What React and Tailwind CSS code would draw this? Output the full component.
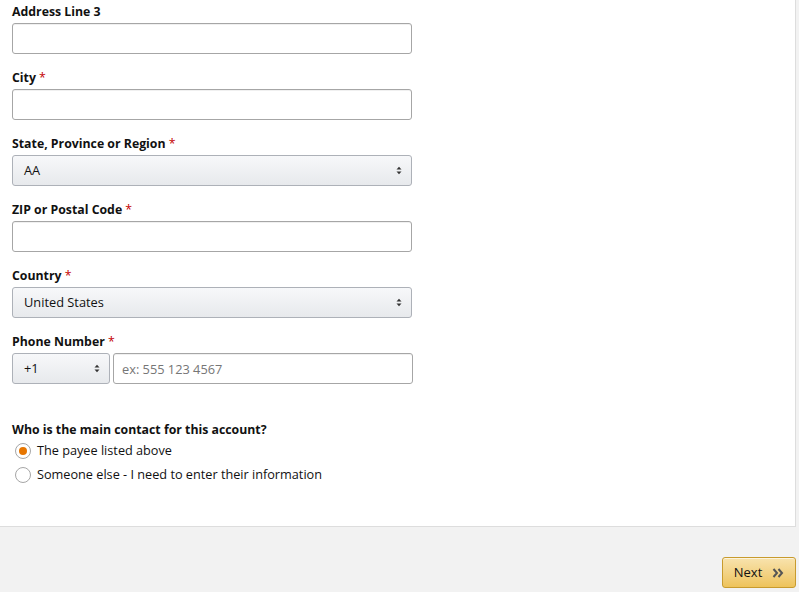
import React from "react";

const font = { fontFamily: '"Open Sans", "Noto Sans", Arial, sans-serif' };

function Label({ children, required }) {
  return (
    <div className="text-[12.3px] leading-[18px] font-bold text-[#111] pt-[3px] pb-[2px]">
      {children}
      {required && <span className="text-[#c40000] font-normal"> *</span>}
    </div>
  );
}

function TextInput({ placeholder = "", className = "" }) {
  return (
    <input
      type="text"
      placeholder={placeholder}
      className={
        "h-[31px] border border-[#a6a6a6] rounded-[3px] bg-white px-[8px] text-[12.8px] text-[#111] placeholder:text-[#767676] outline-none shadow-[inset_0_1px_0_rgba(0,0,0,0.06)] " +
        className
      }
    />
  );
}

function Arrows() {
  return (
    <svg width="6" height="9" viewBox="0 0 6 9" className="shrink-0">
      <path d="M0.5 3.5 L3 0.8 L5.5 3.5 Z" fill="#333" />
      <path d="M0.5 5.5 L3 8.2 L5.5 5.5 Z" fill="#333" />
    </svg>
  );
}

function SelectBox({ value, className = "" }) {
  return (
    <div
      className={
        "h-[31px] border border-[#adb1b8] rounded-[3px] bg-gradient-to-b from-[#f7f8fa] to-[#e7e9ec] flex items-center justify-between pl-[11px] pr-[9px] text-[12.8px] text-[#111] " +
        className
      }
    >
      <span>{value}</span>
      <Arrows />
    </div>
  );
}

function Field({ label, required, children }) {
  return (
    <div className="mb-[12px]">
      <Label required={required}>{label}</Label>
      {children}
    </div>
  );
}

function Radio({ checked, children }) {
  return (
    <label className="flex items-center gap-[6px] h-[24px] text-[12.7px] text-[#111]">
      <span className="ml-[3px] w-[16px] h-[16px] rounded-full border border-[#a6a6a6] bg-white flex items-center justify-center">
        {checked && <span className="w-[8px] h-[8px] rounded-full bg-[#e77600]" />}
      </span>
      <span>{children}</span>
    </label>
  );
}

export default function App() {
  return (
    <div style={font} className="w-[799px] h-[592px] bg-[#f2f2f2] flex flex-col overflow-hidden">
      <div className="w-[796px] h-[527px] bg-white border-r border-b border-[#dddddd] px-[12px] pt-0">
        <div className="w-[400px]">
          <Field label="Address Line 3">
            <TextInput className="w-[400px]" />
          </Field>
          <Field label="City" required>
            <TextInput className="w-[400px]" />
          </Field>
          <Field label="State, Province or Region" required>
            <SelectBox value="AA" className="w-[400px]" />
          </Field>
          <Field label="ZIP or Postal Code" required>
            <TextInput className="w-[400px]" />
          </Field>
          <Field label="Country" required>
            <SelectBox value="United States" className="w-[400px]" />
          </Field>
          <Field label="Phone Number" required>
            <div className="flex gap-[3px] w-[401px]">
              <SelectBox value="+1" className="w-[98px]" />
              <TextInput placeholder="ex: 555 123 4567" className="w-[300px]" />
            </div>
          </Field>
        </div>
        <div className="mt-[37px]">
          <div className="text-[12.3px] leading-[18px] font-bold text-[#111]">
            Who is the main contact for this account?
          </div>
          <Radio checked>The payee listed above</Radio>
          <Radio>Someone else - I need to enter their information</Radio>
        </div>
      </div>
      <div className="flex justify-end pr-[3px] pt-[30px]">
        <button className="h-[31px] w-[74px] rounded-[3px] border border-[#c89b2e] bg-gradient-to-b from-[#f8e3ad] to-[#eec35a] flex items-center justify-center gap-[10px] text-[13px] text-[#111] shadow-[inset_0_1px_0_rgba(255,255,255,0.6)]">
          <span>Next</span>
          <svg width="12" height="10" viewBox="0 0 12 10">
            <path d="M1.5 1 L5 5 L1.5 9" fill="none" stroke="#555" strokeWidth="2" />
            <path d="M6.5 1 L10 5 L6.5 9" fill="none" stroke="#555" strokeWidth="2" />
          </svg>
        </button>
      </div>
    </div>
  );
}
